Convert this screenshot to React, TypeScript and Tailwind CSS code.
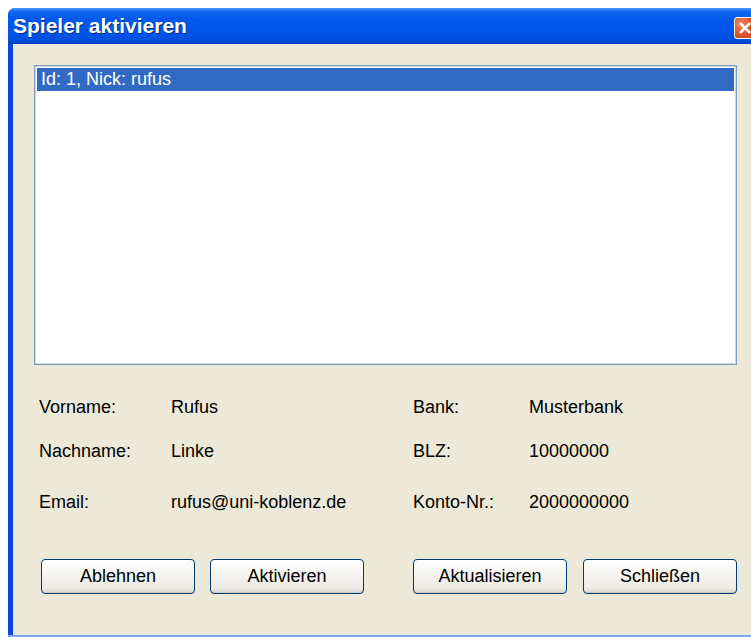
import React from "react";

const details = [
  { label: "Vorname:", value: "Rufus", label2: "Bank:", value2: "Musterbank", gap: "mt-0" },
  { label: "Nachname:", value: "Linke", label2: "BLZ:", value2: "10000000", gap: "mt-[22px]" },
  { label: "Email:", value: "rufus@uni-koblenz.de", label2: "Konto-Nr.:", value2: "2000000000", gap: "mt-[29px]" },
];

function XpButton({ children, className = "" }: { children: React.ReactNode; className?: string }) {
  return (
    <button
      className={
        "h-[35px] w-[154px] rounded-[4px] border border-[#003C74] bg-[linear-gradient(to_bottom,#FFFFFF_0%,#F6F5F1_40%,#ECEBE4_85%,#D9D6CB_100%)] text-[18px] text-black shadow-[inset_0_-1px_0_#CDCAC0] " +
        className
      }
    >
      {children}
    </button>
  );
}

export default function App() {
  return (
    <div
      className="h-[637px] w-[751px] overflow-hidden bg-white pl-[8px] pt-[8px]"
      style={{ fontFamily: '"Liberation Sans", Arial, sans-serif' }}
    >
      <div className="flex h-[629px] w-[756px] flex-col rounded-t-[7px] bg-[#0A48D8]">
        {/* Title bar */}
        <div className="relative flex h-[36px] shrink-0 items-center rounded-t-[7px] bg-[linear-gradient(to_bottom,#4A98FA_0%,#1468F0_10%,#0058EC_30%,#0055E8_70%,#0050E0_88%,#0340C4_100%)] pl-[5px]">
          <span className="text-[21px] font-bold text-white [text-shadow:1px_1px_0_#0A2A8C]">Spieler aktivieren</span>
          <div className="absolute left-[726px] top-[9px] flex h-[22px] w-[22px] items-center justify-center rounded-[3px] border border-white bg-[radial-gradient(circle_at_30%_30%,#F08A6A_0%,#E05A30_45%,#C83E18_100%)]">
            <svg width="12" height="12" viewBox="0 0 12 12">
              <path d="M2 2 L10 10 M10 2 L2 10" stroke="white" strokeWidth="2.6" strokeLinecap="square" />
            </svg>
          </div>
        </div>

        {/* Dialog body */}
        <div className="mx-[5px] flex flex-1 flex-col bg-[#ECE9D8]">
          <div className="ml-[21px] mt-[21px] h-[300px] w-[703px] border border-[#7F9DB9] bg-white p-[2px] shadow-[inset_0_0_0_1px_#C9D6E3]">
            <div className="flex h-[23px] items-center bg-[#316AC5] pl-[4px] text-[18px] text-white">
              Id: 1, Nick: rufus
            </div>
          </div>

          <div className="ml-[26px] mt-[31px] flex flex-col text-[18px] leading-[22px] text-black">
            {details.map((row) => (
              <div key={row.label} className={"flex " + row.gap}>
                <span className="w-[132px]">{row.label}</span>
                <span className="w-[242px]">{row.value}</span>
                <span className="w-[116px]">{row.label2}</span>
                <span>{row.value2}</span>
              </div>
            ))}
          </div>

          <div className="ml-[28px] mt-[46px] flex">
            <XpButton>Ablehnen</XpButton>
            <XpButton className="ml-[15px]">Aktivieren</XpButton>
            <XpButton className="ml-[49px]">Aktualisieren</XpButton>
            <XpButton className="ml-[16px]">Schließen</XpButton>
          </div>
        </div>
        <div className="h-[2px] shrink-0 bg-[#7EA6F0]" />
      </div>
    </div>
  );
}
